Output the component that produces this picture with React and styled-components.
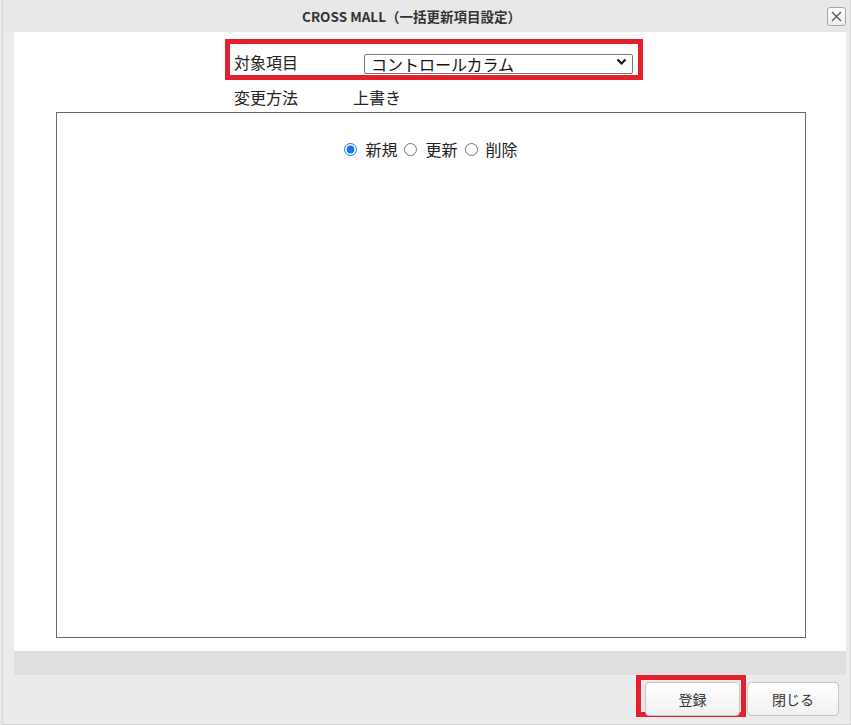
import React from "react";
import styled, { createGlobalStyle } from "styled-components";

const Global = createGlobalStyle`
  html, body { margin: 0; padding: 0; }
  body { background: #e9e9e9; font-family: "Noto Sans CJK JP", "Noto Sans", sans-serif; color: #222; }
`;

const Frame = styled.div`
  box-sizing: border-box;
  width: 849px;
  height: 725px;
  margin-left: 2px;
  background: #ebebeb;
  border-left: 1px solid #d6d6d6;
  border-right: 1px solid #d6d6d6;
  border-bottom: 1px solid #d0d0d0;
  display: flex;
  flex-direction: column;
`;

const TitleBar = styled.div`
  position: relative;
  height: 32px;
  display: flex;
  align-items: center;
  justify-content: center;
  padding-right: 30px;
  background: #e8e8e8;
`;

const Title = styled.div`
  font-family: "Noto Sans CJK JP", sans-serif;
  font-weight: 700;
  font-size: 13.5px;
  color: #333;
`;

const CloseButton = styled.button`
  position: absolute;
  right: 4px;
  top: 7px;
  width: 19px;
  height: 19px;
  padding: 0;
  border: 1px solid #a8a8a8;
  border-radius: 3px;
  background: linear-gradient(#fdfdfd, #ececec);
  display: flex;
  align-items: center;
  justify-content: center;
`;

const Body = styled.div`
  margin: 0 4px 0 11px;
  height: 619px;
  background: #fff;
  display: flex;
  flex-direction: column;
`;

const Form = styled.div`
  margin-left: 211px;
  margin-top: 7px;
  display: flex;
  flex-direction: column;
  align-items: flex-start;
`;

const Highlight = styled.div`
  box-sizing: border-box;
  border: 5px solid #e3202b;
  display: flex;
`;

const FieldRow = styled.div`
  display: flex;
  align-items: ${(p) => p.$align || "center"};
  width: 408px;
  box-sizing: border-box;
  padding: ${(p) => p.$pad || "0"};
  height: ${(p) => p.$h || "auto"};
`;

const Label = styled.div`
  width: ${(p) => p.$w}px;
  font-size: 16px;
  line-height: 20px;
  color: #222;
`;

const Value = styled.div`
  font-size: 16px;
  line-height: 20px;
  color: #222;
`;

const SelectWrap = styled.div`
  position: relative;
  width: 269px;
  height: 20px;
`;

const Select = styled.select`
  appearance: none;
  box-sizing: border-box;
  width: 100%;
  height: 100%;
  border: 1px solid #767676;
  border-radius: 2px;
  background: #fff;
  font-family: "Noto Sans CJK JP", sans-serif;
  font-size: 16px;
  line-height: 18px;
  padding: 0 0 0 6px;
  color: #111;
`;

const Chevron = styled.svg`
  position: absolute;
  right: 6px;
  top: 5px;
  pointer-events: none;
`;

const Panel = styled.div`
  box-sizing: border-box;
  margin: 5px 40px 13px 42px;
  flex: 1;
  border: 1px solid #6a6a6a;
  display: flex;
  flex-direction: column;
  align-items: center;
  padding-top: 25px;
`;

const RadioGroup = styled.div`
  display: flex;
  align-items: center;
  font-size: 16px;
  line-height: 22px;
  color: #222;
`;

const RadioLabel = styled.label`
  display: inline-flex;
  align-items: center;
  margin-right: 7px;
  &:last-child { margin-right: 0; }
`;

const Radio = styled.input`
  width: 13px;
  height: 13px;
  margin: 0 8px 0 0;
  accent-color: #1a73e8;
`;

const Strip = styled.div`
  margin: 0 4px 0 11px;
  height: 24px;
  background: #dfdfdf;
`;

const Footer = styled.div`
  flex: 1;
  display: flex;
  justify-content: flex-end;
  align-items: flex-start;
  padding: 0 11px 0 0;
  gap: 1px;
`;

const Button = styled.button`
  box-sizing: border-box;
  width: ${(p) => p.$w}px;
  height: 34px;
  margin-top: ${(p) => p.$top || 0}px;
  border: 1px solid #c6c6c6;
  border-radius: 4px;
  background: linear-gradient(#ffffff, #f1f1f1);
  font-family: "Noto Sans CJK JP", sans-serif;
  font-size: 14px;
  color: #333;
  padding: 0;
`;

const ButtonHighlight = styled.div`
  box-sizing: border-box;
  border: 5px solid #e3202b;
  padding: 2px 1px 0 4px;
  height: 42px;
`;

export default function App() {
  return (
    <>
      <Global />
      <Frame>
        <TitleBar>
          <Title>CROSS MALL（一括更新項目設定）</Title>
          <CloseButton aria-label="close">
            <svg width="11" height="11" viewBox="0 0 11 11">
              <path d="M1 1 L10 10 M10 1 L1 10" stroke="#555" strokeWidth="1.3" fill="none" />
            </svg>
          </CloseButton>
        </TitleBar>
        <Body>
          <Form>
            <Highlight>
              <FieldRow $pad="8px 0 0 4px" $h="31px" $align="flex-start">
                <Label $w={130}>対象項目</Label>
                <SelectWrap>
                  <Select defaultValue="c">
                    <option value="c">コントロールカラム</option>
                  </Select>
                  <Chevron width="11" height="10" viewBox="0 0 11 10">
                    <path d="M1.5 2.5 L5.5 6.5 L9.5 2.5" stroke="#111" strokeWidth="2.2" fill="none" />
                  </Chevron>
                </SelectWrap>
              </FieldRow>
            </Highlight>
            <FieldRow $pad="6px 0 0 9px" $h="27px">
              <Label $w={119}>変更方法</Label>
              <Value>上書き</Value>
            </FieldRow>
          </Form>
          <Panel>
            <RadioGroup>
              <RadioLabel>
                <Radio type="radio" name="m" defaultChecked />
                新規
              </RadioLabel>
              <RadioLabel>
                <Radio type="radio" name="m" />
                更新
              </RadioLabel>
              <RadioLabel>
                <Radio type="radio" name="m" />
                削除
              </RadioLabel>
            </RadioGroup>
          </Panel>
        </Body>
        <Strip />
        <Footer>
          <ButtonHighlight>
            <Button $w={95}>登録</Button>
          </ButtonHighlight>
          <Button $w={92} $top={7}>閉じる</Button>
        </Footer>
      </Frame>
    </>
  );
}
